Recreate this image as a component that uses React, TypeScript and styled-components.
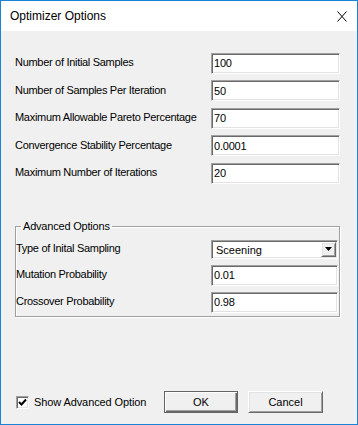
import React, { useState } from "react";
import styled, { createGlobalStyle } from "styled-components";

const GlobalStyle = createGlobalStyle`
  html, body {
    margin: 0;
    padding: 0;
    background: #ffffff;
  }
  * {
    box-sizing: border-box;
  }
`;

const sunken = `
  border: 1px solid;
  border-color: #a0a0a0 #ffffff #ffffff #a0a0a0;
  box-shadow: inset 1px 1px #696969, inset -1px -1px #e3e3e3;
`;

const raised = `
  border: 1px solid;
  border-color: #ffffff #696969 #696969 #ffffff;
  box-shadow: inset 1px 1px #e3e3e3, inset -1px -1px #a0a0a0;
`;

const Window = styled.div`
  width: 358px;
  height: 425px;
  border: 1px solid #1883d7;
  display: flex;
  flex-direction: column;
  font-family: "Liberation Sans", Arial, sans-serif;
  color: #000;
`;

const TitleBar = styled.div`
  height: 30px;
  background: #ffffff;
  display: flex;
  align-items: center;
  justify-content: space-between;
  padding: 0 10px 0 9px;
  flex-shrink: 0;
`;

const Title = styled.span`
  font-size: 12px;
`;

const CloseIcon = styled.svg`
  width: 10px;
  height: 11px;
  display: block;
`;

const Body = styled.div`
  flex: 1;
  background: #f0f0f0;
  display: flex;
  flex-direction: column;
  padding: 21.5px 17px 11px 14px;
`;

const FieldList = styled.div`
  display: grid;
  row-gap: 6.5px;
`;

const Row = styled.div<{ $h?: number }>`
  display: flex;
  align-items: center;
  justify-content: space-between;
  height: ${(p) => p.$h ?? 21}px;
`;

const Label = styled.span`
  font-size: 11px;
  letter-spacing: -0.3px;
  padding-bottom: 2px;
`;

const TextInput = styled.input<{ $w?: number }>`
  ${sunken}
  width: ${(p) => p.$w ?? 129}px;
  height: 21px;
  background: #ffffff;
  font-family: "Liberation Sans", Arial, sans-serif;
  font-size: 11px;
  letter-spacing: -0.2px;
  padding: 0 2px;
  margin: 0;
  outline: none;
  color: #000;
`;

const GroupBox = styled.fieldset`
  margin: 36px 0 0 0;
  padding: 7px 1px 3px 0;
  border: 1px solid #a0a0a0;
  box-shadow: 1px 1px #ffffff, inset 1px 1px #ffffff;
  display: grid;
  row-gap: 6px;
  min-width: 0;
`;

const Legend = styled.legend`
  font-size: 11px;
  letter-spacing: -0.2px;
  margin-left: 5px;
  padding: 0 2px;
  line-height: 13px;
`;

const Combo = styled.div`
  ${sunken}
  width: 127px;
  height: 19px;
  background: #ffffff;
  display: flex;
  align-items: center;
  justify-content: space-between;
  padding: 2px 1px 2px 4px;
  font-size: 11px;
`;

const ComboText = styled.span`
  padding-top: 2px;
`;

const DropButton = styled.div`
  ${raised}
  background: #f0f0f0;
  width: 15px;
  height: 15px;
  display: flex;
  align-items: center;
  justify-content: center;
`;

const Footer = styled.div`
  margin-top: auto;
  display: flex;
  align-items: center;
  height: 22px;
  padding-left: 1px;
`;

const CheckLabel = styled.label`
  width: 148px;
  display: flex;
  align-items: center;
  font-size: 11px;
  letter-spacing: -0.1px;
  cursor: default;
`;

const CheckBox = styled.span`
  ${sunken}
  width: 13px;
  height: 13px;
  background: #ffffff;
  display: flex;
  align-items: center;
  justify-content: center;
  margin-right: 5px;
`;

const Button = styled.button<{ $default?: boolean; $ml?: number; $w?: number }>`
  width: ${(p) => p.$w ?? 74}px;
  height: 22px;
  margin: 0 0 0 ${(p) => p.$ml ?? 0}px;
  padding: 0;
  background: #f0f0f0;
  font-family: "Liberation Sans", Arial, sans-serif;
  font-size: 11px;
  color: #000;
  ${(p) =>
    p.$default
      ? `
    border: 1px solid #646464;
    box-shadow: inset 1px 1px #ffffff, inset -1px -1px #696969, inset -2px -2px #a0a0a0;
  `
      : raised}
`;

const fields = [
  { label: "Number of Initial Samples", value: "100" },
  { label: "Number of Samples Per Iteration", value: "50" },
  { label: "Maximum Allowable Pareto Percentage", value: "70" },
  { label: "Convergence Stability Percentage", value: "0.0001" },
  { label: "Maximum Number of Iterations", value: "20" },
];

const App: React.FC = () => {
  const [showAdvanced, setShowAdvanced] = useState(true);

  return (
    <>
      <GlobalStyle />
      <Window>
        <TitleBar>
          <Title>Optimizer Options</Title>
          <CloseIcon viewBox="0 0 10 11">
            <path d="M0.5 0.5 L9.5 10.5 M9.5 0.5 L0.5 10.5" stroke="#000" strokeWidth="1" fill="none" />
          </CloseIcon>
        </TitleBar>
        <Body>
          <FieldList>
            {fields.map((f) => (
              <Row key={f.label}>
                <Label>{f.label}</Label>
                <TextInput defaultValue={f.value} />
              </Row>
            ))}
          </FieldList>

          <GroupBox>
            <Legend>Advanced Options</Legend>
            <Row $h={19}>
              <Label>Type of Inital Sampling</Label>
              <Combo>
                <ComboText>Sceening</ComboText>
                <DropButton>
                  <svg width="7" height="4" viewBox="0 0 7 4">
                    <path d="M0 0 H7 L3.5 4 Z" fill="#000" />
                  </svg>
                </DropButton>
              </Combo>
            </Row>
            <Row>
              <Label>Mutation Probability</Label>
              <TextInput $w={127} defaultValue="0.01" />
            </Row>
            <Row>
              <Label>Crossover Probability</Label>
              <TextInput $w={127} defaultValue="0.98" />
            </Row>
          </GroupBox>

          <Footer>
            <CheckLabel onClick={() => setShowAdvanced(!showAdvanced)}>
              <CheckBox>
                {showAdvanced && (
                  <svg width="9" height="9" viewBox="0 0 9 9">
                    <path d="M1 4 L3.5 6.5 L8 1.5" stroke="#000" strokeWidth="2" fill="none" />
                  </svg>
                )}
              </CheckBox>
              Show Advanced Option
            </CheckLabel>
            <Button $default>OK</Button>
            <Button $ml={10} $w={75}>Cancel</Button>
          </Footer>
        </Body>
      </Window>
    </>
  );
};

export default App;
